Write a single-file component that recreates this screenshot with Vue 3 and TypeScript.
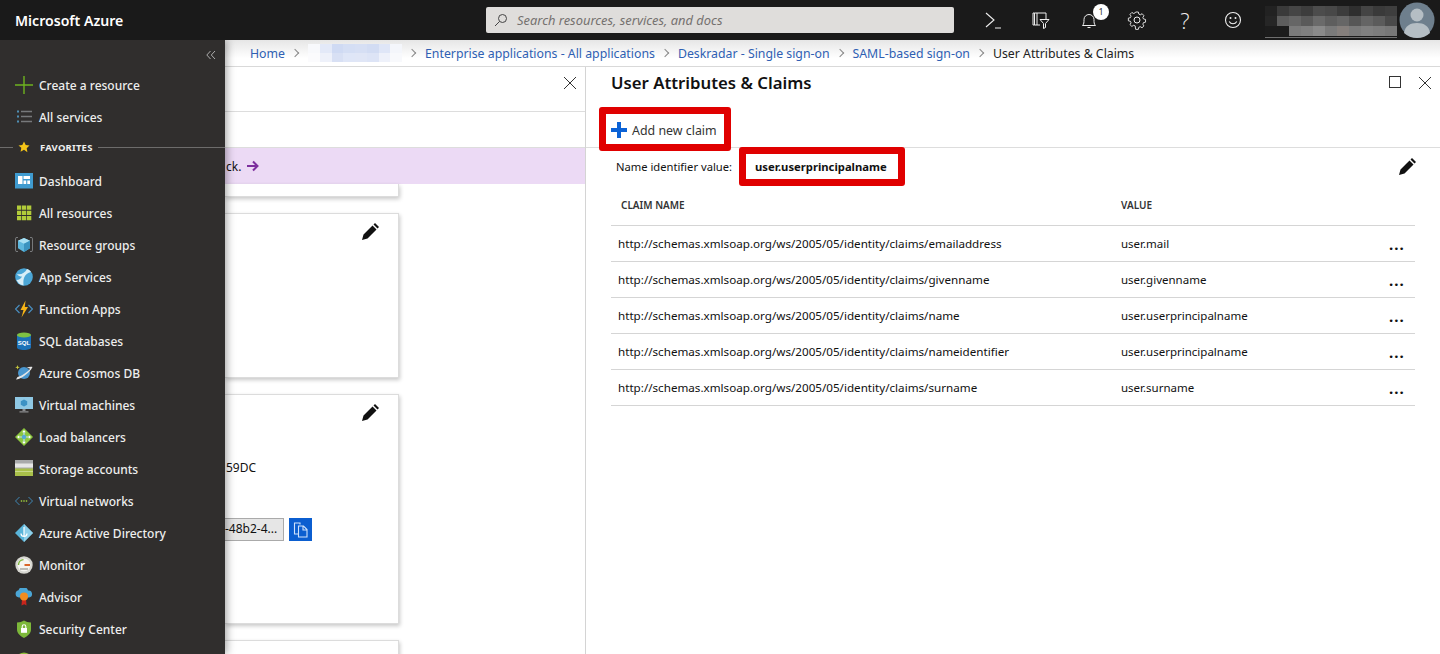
<script setup lang="ts">
type NavItem = { label: string; icon: string };

const topNav: NavItem[] = [
  { label: "Create a resource", icon: '<path d="M9 0v18M0 9h18" stroke="#6db31f" stroke-width="1.4"/>' },
  { label: "All services", icon: '<path d="M2 3.5h2M2 8.5h2M2 13.5h2" stroke="#4f8fb5" stroke-width="2"/><path d="M6 3.5h11M6 8.5h11M6 13.5h11" stroke="#77797b" stroke-width="1.6"/>' },
];

const favorites: NavItem[] = [
  { label: "Dashboard", icon: '<rect y="1" width="18" height="15.5" fill="#3f9bd0"/><path d="M3 4h4.5v8H3zM8.5 4H15v3H8.5zM8.5 8.5h2.7V12H8.5zM12.3 8.5H15V12h-2.7z" fill="#fff"/>' },
  { label: "All resources", icon: '<path d="M2 1.5h4.3v4.3H2zM7 1.5h4.3v4.3H7zM12 1.5h4.3v4.3H12zM2 6.8h4.3v4.3H2zM7 6.8h4.3v4.3H7zM12 6.8h4.3v4.3H12zM2 12h4.3v4.3H2zM7 12h4.3v4.3H7zM12 12h4.3v4.3H12z" fill="#b2cc3a"/>' },
  { label: "Resource groups", icon: '<path d="M3 1.5H1L.5 3v11l.5 1.5h2M15 1.5h2l.5 1.5v11l-.5 1.5h-2" fill="none" stroke="#77797b"/><path d="M9 2l6 2.8v7.5L9 16l-6-3.7V4.8z" fill="#5db7dd"/><path d="M9 2l6 2.8L9 7.8 3 4.8z" fill="#a8e0f3"/><path d="M9 7.8V16l6-3.7V4.8z" fill="#3a93bf"/>' },
  { label: "App Services", icon: '<circle cx="9" cy="9" r="8.8" fill="#4ba6d6"/><path d="M2 6c4 1 8-1 10-5 2 .5 3 1.5 4 3-3 .5-6 3-7 6-1 3-.5 5-.5 7.5C5 17 3 15 1.5 12 4 12 6 10.5 7 8.5 5 8.5 3 8 2 6z" fill="#d8eef7"/>' },
  { label: "Function Apps", icon: '<path d="M4.5 5L.5 9l4 4M13.5 5l4 4-4 4" fill="none" stroke="#4a8fc0" stroke-width="1.2"/><path d="M10.5 .5L5.5 10h3l-2 7.5L13 7H9.8z" fill="#f7b516"/>' },
  { label: "SQL databases", icon: '<path d="M2 3v12.5c0 1.5 3 2.5 7 2.5s7-1 7-2.5V3z" fill="#1c72b8"/><ellipse cx="9" cy="3" rx="7" ry="2.5" fill="#7fc243"/><text x="9" y="12.5" text-anchor="middle" font-size="6" font-weight="700" fill="#fff" font-family="Liberation Sans, sans-serif">SQL</text>' },
  { label: "Azure Cosmos DB", icon: '<circle cx="9" cy="9" r="6" fill="#4a97cf"/><path d="M1 15.5C5 15.5 15 9 17.5 3c-2-.5-4 0-6 1 2 0 3 .2 3.5.8C13 8 6 12.5 2.5 13z" fill="#e6e6e6"/><path d="M2.5 1l.6 1.7 1.7.6-1.7.6-.6 1.7-.6-1.7L.2 3.3l1.7-.6z" fill="#c8c93f"/>' },
  { label: "Virtual machines", icon: '<rect y="1" width="18" height="12" fill="#8fc8e4"/><path d="M9 3.5l3.2 1.7v3.5L9 10.5 5.8 8.7V5.2z" fill="#3c92c4"/><path d="M7.5 13h3v2h-3zM4.5 15.2h9v1.3h-9z" fill="#8a8c8e"/>' },
  { label: "Load balancers", icon: '<path d="M9 0l9 9-9 9-9-9z" fill="#8cc63f"/><path d="M9 3v12M3 9h12" stroke="#bfe3f2" stroke-width="1.2"/><circle cx="9" cy="9" r="2.2" fill="#55a9d6"/><path d="M9 2l1.8 2.2H7.2zM9 16l1.8-2.2H7.2zM2 9l2.2-1.8v3.6zM16 9l-2.2-1.8v3.6z" fill="#fff"/>' },
  { label: "Storage accounts", icon: '<rect width="18" height="16" fill="#a9aaab"/><rect y="3.5" width="18" height="4" fill="#e7e7e7"/><rect y="8.5" width="18" height="7.5" fill="#a9c04a"/><rect y="11" width="18" height="1" fill="#c8d98a"/>' },
  { label: "Virtual networks", icon: '<path d="M4.5 5L.5 9l4 4M13.5 5l4 4-4 4" fill="none" stroke="#3f86b5" stroke-width="1"/><path d="M5.8 9h1.4M8.3 9h1.4M10.8 9h1.4" stroke="#9ccb3b" stroke-width="1.4"/>' },
  { label: "Azure Active Directory", icon: '<path d="M9 0l9 9-9 9-9-9z" fill="#59b4d9"/><path d="M9 0l9 9-9 9z" fill="#8ed0ea"/><path d="M9 3v9M6 9.5a3 3 0 0 0 6 0" fill="none" stroke="#fff" stroke-width="1.2"/>' },
  { label: "Monitor", icon: '<circle cx="9" cy="9" r="8.7" fill="#d6d6d0"/><circle cx="9" cy="9" r="6.5" fill="#f6f6f2"/><path d="M3.5 9a5.5 5.5 0 0 1 5-5.4" fill="none" stroke="#7db53a" stroke-width="1.4"/><path d="M9.5 9H15" stroke="#d9662b" stroke-width="2"/><path d="M5 13h8" stroke="#a8a8a2" stroke-width="1.5"/>' },
  { label: "Advisor", icon: '<path d="M4 9.5a3.7 3.7 0 0 1-.5-7.3A5 5 0 0 1 13 2.5a3.5 3.5 0 0 1 1 7z" fill="#4ba6d6"/><path d="M7 11l-.5 6.5 2.7-1.2 2.3 1.2L11 11z" fill="#c8251d"/><circle cx="9" cy="8.5" r="4" fill="#f28c1e"/>' },
  { label: "Security Center", icon: '<path d="M2 2.5C5 2.5 7 1.5 9 .5c2 1 4 2 7 2v7c0 4-3.5 6.5-7 8.5-3.5-2-7-4.5-7-8.5z" fill="#7db83a"/><rect x="6" y="8" width="6" height="4.8" fill="#fff"/><path d="M7.2 8V6.5a1.8 1.8 0 0 1 3.6 0V8" fill="none" stroke="#fff" stroke-width="1.1"/>' },
  { label: "", icon: '<circle cx="9" cy="9" r="8.5" fill="#8dbb3a"/>' },
];

const claims = [
  { name: "http://schemas.xmlsoap.org/ws/2005/05/identity/claims/emailaddress", value: "user.mail" },
  { name: "http://schemas.xmlsoap.org/ws/2005/05/identity/claims/givenname", value: "user.givenname" },
  { name: "http://schemas.xmlsoap.org/ws/2005/05/identity/claims/name", value: "user.userprincipalname" },
  { name: "http://schemas.xmlsoap.org/ws/2005/05/identity/claims/nameidentifier", value: "user.userprincipalname" },
  { name: "http://schemas.xmlsoap.org/ws/2005/05/identity/claims/surname", value: "user.surname" },
];

// censored bits of the screenshot, one grey per mosaic tile
const userTiles = [
  "#222", "#3a3a3a", "#454545", "#3d3d3d", "#4c4c4c", "#484848", "#3c3c3c", "#2f2f2f", "#444", "#3a3a3a", "#3e3e3e",
  "#262626", "#5d5d5d", "#666", "#5a5a5a", "#6a6a6a", "#5e5e5e", "#666", "#565656", "#646464", "#5b5b5b", "#4a4a4a",
  "#1c1c1c", "#1c1c1c", "#7b7b7b", "#808080", "#8a8a8a", "#7a7a7a", "#857f7c", "#7a7a7a", "#808080", "#7c7c7c", "#777",
];
const crumbTiles = [
  "#f8f9fc", "#e3e9f8", "#cfdaf3", "#d4def4", "#d6dff4", "#d2dcf3", "#dfe6f7", "#f4f6fb",
  "#fbfbfd", "#eef1fa", "#d8e0f4", "#dfe6f7", "#e0e6f6", "#dde4f6", "#eef1fa", "#f8f9fc",
];
</script>

<template>
  <div class="app">
    <header class="topbar">
      <div class="brand">Microsoft Azure</div>
      <div class="search">
        <svg viewBox="0 0 14 14" width="14" height="14">
          <circle cx="8.5" cy="5.5" r="4" fill="none" stroke="#444" />
          <path d="M5.5 8.5L1 13" stroke="#444" />
        </svg>
        <span>Search resources, services, and docs</span>
      </div>
      <div class="top-icons">
        <button class="top-btn">
          <svg viewBox="0 0 20 20" width="20" height="20">
            <path d="M3 3l8 7-8 7M12 18h6" fill="none" stroke="#eee" stroke-width="1.1" />
          </svg>
        </button>
        <button class="top-btn">
          <svg viewBox="0 0 20 20" width="20" height="20">
            <path d="M9 15H3.5V3H15v6M3.5 3H2v12h1.5M6 3v12" fill="none" stroke="#eee" />
            <path d="M9 9.5h9l-3.5 4v4l-2 1v-5z" fill="none" stroke="#eee" />
          </svg>
        </button>
        <button class="top-btn">
          <svg viewBox="0 0 20 20" width="20" height="20">
            <path d="M3.5 15.5c1.5-1.5 1.5-3 1.5-6a5 5 0 0 1 10 0c0 3 0 4.5 1.5 6zM8.5 17.5h3" fill="none" stroke="#eee" />
          </svg>
          <span class="badge">1</span>
        </button>
        <button class="top-btn">
          <svg viewBox="0 0 20 20" width="20" height="20">
            <path d="M8.5 2h3l.5 2.3 1.7.8 2-1.2 2 2.2-1.2 2 .7 1.6 2.3.6v3l-2.3.5-.7 1.7 1.2 2-2.1 2-2-1.2-1.6.7-.5 2.3h-3L8 17.5l-1.7-.7-2 1.2-2.1-2 1.2-2-.7-1.7L.4 11.8v-3l2.3-.5.7-1.7-1.2-2 2.1-2.1 2 1.2L8 2.9z" transform="translate(1 .2) scale(.9)" fill="none" stroke="#eee" />
            <circle cx="10" cy="10" r="3" fill="none" stroke="#eee" />
          </svg>
        </button>
        <button class="top-btn help">?</button>
        <button class="top-btn">
          <svg viewBox="0 0 20 20" width="20" height="20">
            <circle cx="10" cy="10" r="7.5" fill="none" stroke="#eee" stroke-width="1.1" />
            <path d="M6.2 11.5c1.8 3 5.8 3 7.6 0" fill="none" stroke="#eee" stroke-width="1.1" />
            <circle cx="7.5" cy="8" r="1" fill="#eee" />
            <circle cx="12.5" cy="8" r="1" fill="#eee" />
          </svg>
        </button>
      </div>
      <div class="account">
        <div class="user-tiles">
          <i v-for="(tile, i) in userTiles" :key="i" :style="{ background: tile }"></i>
        </div>
        <div class="user-line"></div>
      </div>
      <div class="avatar">
        <svg viewBox="0 0 36 36" width="36" height="36">
          <circle cx="18" cy="18" r="17.5" fill="#6e7f8d" />
          <circle cx="18" cy="13" r="6.5" fill="#b5bec4" />
          <path d="M5 31c1-7 6-10 13-10s12 3 13 10c-3 3-8 5-13 5s-10-2-13-5z" fill="#b5bec4" />
        </svg>
      </div>
    </header>

    <div class="body">
      <aside class="sidebar">
        <div class="collapse">
          <svg viewBox="0 0 10 10" width="10" height="10">
            <path d="M4.5 1L.8 5l3.7 4M9 1L5.3 5 9 9" fill="none" stroke="#bbb" stroke-width=".9" />
          </svg>
        </div>
        <a v-for="item in topNav" :key="item.label" class="nav-item">
          <svg class="nav-icon" viewBox="0 0 18 18" width="18" height="18" v-html="item.icon"></svg>
          <span>{{ item.label }}</span>
        </a>
        <div class="fav-head">
          <span class="rule short"></span>
          <svg viewBox="0 0 12 12" width="12" height="12">
            <path d="M6 .5l1.7 3.6 3.8.5-2.8 2.7.7 3.9L6 8.8l-3.4 1.9.7-3.9L.5 4.600l3.8-.5z" fill="#f5c518" />
          </svg>
          <span class="fav-label">FAVORITES</span>
          <span class="rule"></span>
        </div>
        <a v-for="item in favorites" :key="item.label" class="nav-item">
          <svg class="nav-icon" viewBox="0 0 18 18" width="18" height="18" v-html="item.icon"></svg>
          <span>{{ item.label }}</span>
        </a>
      </aside>

      <main class="main">
        <nav class="crumbs">
          <a>Home</a>
          <span class="sep"></span>
          <div class="crumb-tiles">
            <i v-for="(tile, i) in crumbTiles" :key="i" :style="{ background: tile }"></i>
          </div>
          <span class="sep"></span>
          <a>Enterprise applications - All applications</a>
          <span class="sep"></span>
          <a>Deskradar - Single sign-on</a>
          <span class="sep"></span>
          <a>SAML-based sign-on</a>
          <span class="sep"></span>
          <span class="current">User Attributes &amp; Claims</span>
        </nav>

        <div class="blades">
          <section class="blade-left">
            <div class="left-head">
              <svg viewBox="0 0 14 14" width="14" height="14">
                <path d="M1 1l12 12M13 1L1 13" stroke="#333" />
              </svg>
            </div>
            <div class="left-tools"></div>
            <div class="notice">
              <span>ck.</span>
              <svg viewBox="0 0 14 12" width="14" height="12">
                <path d="M1 6h10M7 1.5L11.5 6 7 10.5" fill="none" stroke="#7d2f9e" stroke-width="2" />
              </svg>
            </div>
            <div class="cards">
              <div class="card card-stub"></div>
              <div class="card card-a">
                <svg class="pencil" viewBox="0 0 17 17" width="17" height="17">
                  <path d="M0 17l1.5-5.5 9-9 4 4-9 9zM11.5 1.5L13 0l4 4-1.5 1.5z" fill="#111" />
                </svg>
              </div>
              <div class="card card-b">
                <svg class="pencil" viewBox="0 0 17 17" width="17" height="17">
                  <path d="M0 17l1.5-5.5 9-9 4 4-9 9zM11.5 1.5L13 0l4 4-1.5 1.5z" fill="#111" />
                </svg>
                <div class="hash">59DC</div>
                <div class="copy-row">
                  <div class="copy-field">-48b2-4...</div>
                  <button class="copy-btn">
                    <svg viewBox="0 0 18 18" width="18" height="18">
                      <path d="M8 3.5V2H2.5v11H6M6.5 5h5L15 8.5V16H6.5zM11 5v4h4" fill="none" stroke="#cfe2fb" stroke-width="1.1" />
                    </svg>
                  </button>
                </div>
              </div>
              <div class="card card-c"></div>
            </div>
          </section>

          <section class="blade-right">
            <div class="right-head">
              <h1>User Attributes &amp; Claims</h1>
              <div class="win-btns">
                <svg viewBox="0 0 13 13" width="13" height="13">
                  <rect x=".5" y=".5" width="11" height="11" fill="none" stroke="#333" />
                </svg>
                <svg viewBox="0 0 14 14" width="14" height="14">
                  <path d="M1 1l12 12M13 1L1 13" stroke="#333" />
                </svg>
              </div>
            </div>
            <div class="right-tools">
              <button class="add-btn">
                <svg viewBox="0 0 16 16" width="16" height="16">
                  <path d="M8 0v16M0 8h16" stroke="#0b62d6" stroke-width="4" />
                </svg>
                <span>Add new claim</span>
              </button>
            </div>
            <div class="identifier">
              <span class="id-label">Name identifier value:</span>
              <strong>user.userprincipalname</strong>
              <svg viewBox="0 0 17 17" width="17" height="17">
                <path d="M0 17l1.5-5.5 9-9 4 4-9 9zM11.5 1.5L13 0l4 4-1.5 1.5z" fill="#111" />
              </svg>
            </div>
            <div class="table">
              <div class="table-head">
                <span class="col-name">CLAIM NAME</span>
                <span class="col-value">VALUE</span>
              </div>
              <div v-for="claim in claims" :key="claim.name" class="table-row">
                <span class="col-name">{{ claim.name }}</span>
                <span class="col-value">{{ claim.value }}</span>
                <span class="more">...</span>
              </div>
            </div>

            <!-- red annotation boxes drawn over the screenshot -->
            <div class="mark mark-add"></div>
            <div class="mark mark-id"></div>
          </section>
        </div>
      </main>
    </div>
  </div>
</template>

<style scoped>
.app {
  width: 1440px;
  height: 654px;
  overflow: hidden;
  display: flex;
  flex-direction: column;
  font-family: "Noto Sans", "Open Sans", sans-serif;
  font-size: 12px;
  color: #111;
  background: #fff;
}

.topbar {
  height: 40px;
  flex: none;
  display: flex;
  align-items: center;
  background: #1a1a1a;
  position: relative;
  z-index: 3;
}

.brand {
  width: 486px;
  padding-left: 15px;
  box-sizing: border-box;
  color: #fff;
  font-size: 14.1px;
  font-weight: 600;
}

.search {
  width: 468px;
  height: 26px;
  display: flex;
  align-items: center;
  gap: 9px;
  padding-left: 8px;
  box-sizing: border-box;
  background: #dfdddb;
  border-radius: 2px;
  color: #75716f;
  font-size: 12.9px;
  font-style: italic;
}

.top-icons {
  display: flex;
  margin-left: 15px;
}

.top-btn {
  position: relative;
  width: 48px;
  height: 40px;
  padding: 0;
  border: 0;
  background: none;
  color: #eee;
  display: flex;
  align-items: center;
  justify-content: center;
  font-family: inherit;
}

.help {
  font-family: "Open Sans", sans-serif;
  font-size: 22px;
  font-weight: 300;
}

.badge {
  position: absolute;
  top: 4px;
  right: 4px;
  width: 16px;
  height: 16px;
  border-radius: 50%;
  background: #fff;
  color: #333;
  font-size: 9px;
  line-height: 16px;
  text-align: center;
}

.account {
  width: 132px;
  margin-left: 8px;
  display: flex;
  flex-direction: column;
  height: 32px;
  margin-top: 4px;
}

.user-tiles {
  display: grid;
  grid-template-columns: repeat(11, 1fr);
  grid-auto-rows: 10px;
  height: 30px;
}

.user-line {
  height: 3px;
  margin-top: 1px;
  background: #6f6f6f;
}

.avatar {
  width: 36px;
  height: 36px;
  margin-left: 2px;
}

.body {
  flex: 1;
  min-height: 0;
  display: flex;
}

.sidebar {
  width: 225px;
  flex: none;
  overflow: hidden;
  background: #302e2d;
  box-shadow: 2px 0 8px rgba(0, 0, 0, 0.35);
  position: relative;
  z-index: 2;
  color: #eee;
  font-size: 12px;
}

.collapse {
  height: 29px;
  display: flex;
  justify-content: flex-end;
  align-items: center;
  padding-right: 9px;
}

.nav-item {
  height: 32px;
  display: flex;
  align-items: center;
  padding-left: 15px;
  gap: 6px;
  font-weight: 500;
}

.nav-icon {
  flex: none;
}

.fav-head {
  height: 30px;
  display: flex;
  align-items: center;
  gap: 5px;
  margin: -1px 0 3px;
}

.fav-head svg {
  flex: none;
  margin: 0 4px 0 0;
}

.rule {
  flex: 1;
  height: 1px;
  background: #6d6c6b;
}

.rule.short {
  flex: none;
  width: 13px;
}

.fav-label {
  font-size: 9.5px;
  font-weight: 700;
  letter-spacing: 0.2px;
  margin-left: 1px;
}

.main {
  flex: 1;
  min-width: 0;
  display: flex;
  flex-direction: column;
}

.crumbs {
  height: 27px;
  flex: none;
  box-sizing: border-box;
  display: flex;
  align-items: center;
  padding-left: 25px;
  border-bottom: 1px solid #d9d9d9;
  background: linear-gradient(#e6e6e6, #fff 70%);
  font-size: 12.3px;
  color: #2f5fb3;
}

.sep {
  width: 5px;
  height: 5px;
  margin: 0 10px 0 7px;
  border-top: 1px solid #888;
  border-right: 1px solid #888;
  transform: rotate(45deg);
}

.crumb-tiles {
  width: 94px;
  height: 18px;
  display: grid;
  grid-template-columns: repeat(8, 1fr);
}

.current {
  color: #222;
}

.blades {
  flex: 1;
  min-height: 0;
  display: flex;
}

.blade-left {
  width: 361px;
  flex: none;
  display: flex;
  flex-direction: column;
  overflow: hidden;
  border-right: 1px solid #d4d4d4;
  box-sizing: border-box;
}

.left-head {
  height: 45px;
  flex: none;
  box-sizing: border-box;
  border-bottom: 1px solid #ddd;
  display: flex;
  justify-content: flex-end;
  padding: 9px 8px 0 0;
}

.left-tools {
  height: 36px;
  flex: none;
  box-sizing: border-box;
  border-bottom: 1px solid #ddd;
}

.notice {
  height: 36px;
  flex: none;
  display: flex;
  align-items: center;
  gap: 5px;
  background: #ecdaf5;
  padding-left: 1px;
}

.cards {
  display: flex;
  flex-direction: column;
  gap: 16px;
  width: 174px;
}

.card {
  flex: none;
  box-sizing: border-box;
  border: 1px solid #dcdcdc;
  border-left: 0;
  background: #fff;
  box-shadow: 1px 2px 4px rgba(0, 0, 0, 0.22);
  position: relative;
}

.card-stub {
  height: 13px;
  border-top: 0;
}

.card-a {
  height: 165px;
}

.card-b {
  height: 230px;
}

.card-c {
  height: 60px;
}

.pencil {
  position: absolute;
  top: 9px;
  right: 19px;
}

.hash {
  padding: 64px 0 0 1px;
  line-height: 18px;
}

.copy-row {
  display: flex;
  gap: 5px;
  margin-top: 41px;
}

.copy-field {
  width: 59px;
  height: 23px;
  box-sizing: border-box;
  background: #e6e6e6;
  border: 1px solid #aaa;
  border-left: 0;
  line-height: 20px;
}

.copy-btn {
  width: 23px;
  height: 23px;
  padding: 0;
  border: 0;
  background: #0b5ed0;
  display: flex;
  align-items: center;
  justify-content: center;
}

.blade-right {
  flex: 1;
  min-width: 0;
  position: relative;
  display: flex;
  flex-direction: column;
}

.right-head {
  height: 45px;
  flex: none;
  display: flex;
  justify-content: space-between;
  padding: 0 8px 0 25px;
}

.right-head h1 {
  margin: 0;
  font-size: 16.75px;
  font-weight: 600;
  line-height: 32px;
}

.win-btns {
  display: flex;
  gap: 16px;
  padding-top: 9px;
}

.right-tools {
  height: 36px;
  flex: none;
  box-sizing: border-box;
  border-bottom: 1px solid #ddd;
  padding-left: 25px;
}

.add-btn {
  display: flex;
  align-items: center;
  gap: 5px;
  height: 28px;
  margin-top: 4px;
  padding: 0;
  border: 0;
  background: none;
  font-family: inherit;
  font-size: 12.4px;
  color: #333;
}

.identifier {
  height: 37px;
  flex: none;
  display: flex;
  align-items: center;
  padding: 0 24px 0 30px;
}

.id-label {
  font-size: 11.2px;
  margin-right: 23px;
}

.identifier strong {
  flex: 1;
  font-size: 11.25px;
  font-weight: 700;
}

.table {
  margin: 0 25px;
}

.table-head {
  height: 41px;
  display: flex;
  align-items: center;
  box-sizing: border-box;
  border-bottom: 1px solid #d5d5d5;
  font-size: 10px;
  font-weight: 600;
  color: #333;
}

.table-head .col-name {
  padding-left: 10px;
  width: 500px;
}

.table-row {
  height: 36px;
  box-sizing: border-box;
  display: flex;
  align-items: center;
  border-bottom: 1px solid #d5d5d5;
  font-size: 11.65px;
}

.table-row .col-name {
  padding-left: 7px;
  width: 503px;
}

.table-row .col-value {
  font-size: 11.5px;
}

.col-value {
  flex: 1;
}

.more {
  width: 26px;
  font-size: 15px;
  font-weight: 700;
  letter-spacing: 1px;
  line-height: 1;
  padding-top: 2px;
}

.mark {
  position: absolute;
  box-sizing: border-box;
  border: 7px solid #e00000;
  border-radius: 3px;
}

.mark-add {
  left: 13px;
  top: 40px;
  width: 132px;
  height: 44px;
}

.mark-id {
  left: 153px;
  top: 80px;
  width: 166px;
  height: 39px;
}
</style>
